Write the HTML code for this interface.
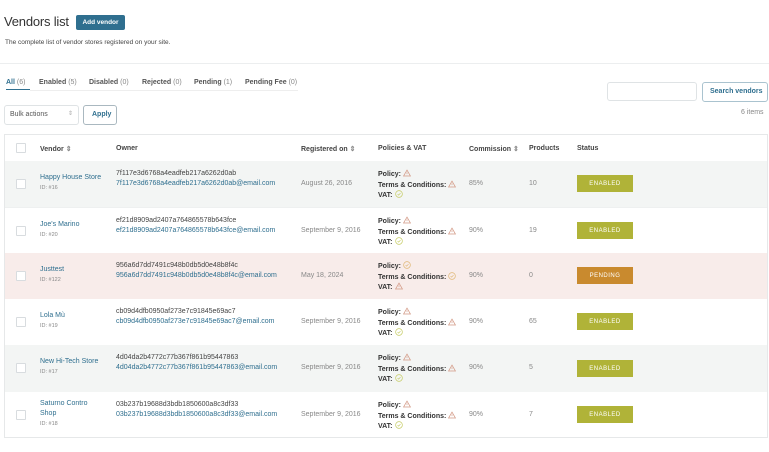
<!DOCTYPE html>
<html><head><meta charset="utf-8"><style>
*{box-sizing:border-box;margin:0;padding:0}
body{width:769px;height:452px;background:#fff;font-family:"Liberation Sans",sans-serif;color:#444;position:relative;overflow:hidden;font-size:7px}
.a{position:absolute;white-space:nowrap}
h1{position:absolute;left:4px;top:14px;font-size:13px;font-weight:400;color:#333;letter-spacing:-.2px}
.btn{position:absolute;left:76px;top:15px;width:49px;height:15px;background:#2f6f8f;color:#fff;font-size:6.5px;font-weight:bold;display:flex;align-items:center;justify-content:center;border-radius:2px}
.tab{position:absolute;top:79px;font-size:7px;font-weight:bold;color:#555}
.tab span{font-weight:400;color:#888}
.box{position:absolute;border:1px solid #dfe3e5;border-radius:3px;background:#fff}
.tbl{position:absolute;left:4px;top:134px;width:764px;height:304px;border:1px solid #e6e8e9}
.row{position:absolute;left:0;width:762px}
.cb{position:absolute;left:11px;width:10px;height:10px;border:1px solid #d8dcdf;background:#fff;border-radius:1px}
.th{position:absolute;top:10px;font-weight:bold;color:#444;font-size:7px}
.l{color:#2f6f8f}
.g{color:#888}
.b{font-weight:bold;color:#333}
.st{position:absolute;left:572px;width:56px;height:17px;color:#fff;font-size:6px;letter-spacing:.5px;display:flex;align-items:center;justify-content:center}
svg{vertical-align:-1px;margin-left:2px}
</style></head><body>
<svg width="0" height="0" style="position:absolute"><defs>
<symbol id="w" viewBox="0 0 10 9"><path d="M5 .8L9.3 8.3H.7Z" fill="none" stroke="#d39a86" stroke-width=".9"/><path d="M5 3.5v2.3M5 6.8v.4" stroke="#d39a86" stroke-width=".8"/></symbol>
<symbol id="o" viewBox="0 0 10 10"><circle cx="5" cy="5" r="4.2" fill="none" stroke="#c6cc66" stroke-width=".9"/><path d="M3.2 5.1l1.3 1.3 2.4-2.6" fill="none" stroke="#c6cc66" stroke-width=".8"/></symbol>
<symbol id="p" viewBox="0 0 10 10"><circle cx="5" cy="5" r="4.2" fill="none" stroke="#e0b877" stroke-width=".9"/><path d="M3.2 5.1l1.3 1.3 2.4-2.6" fill="none" stroke="#e0b877" stroke-width=".8"/></symbol>
</defs></svg>
<h1>Vendors list</h1>
<div class="btn">Add vendor</div>
<div class="a" style="left:5px;top:39px;font-size:6.5px;color:#444">The complete list of vendor stores registered on your site.</div>
<div class="a" style="left:0;top:63px;width:769px;border-top:1px solid #eceeef"></div>
<div class="tab" style="left:6px;color:#2f6f8f">All <span>(6)</span></div>
<div class="a" style="left:6px;top:89px;width:24px;border-top:1.5px solid #2f6f8f"></div>
<div class="a" style="left:30px;top:90px;width:268px;border-top:1px solid #eee"></div>
<div class="tab" style="left:39px">Enabled <span>(5)</span></div>
<div class="tab" style="left:89px">Disabled <span>(0)</span></div>
<div class="tab" style="left:142px">Rejected <span>(0)</span></div>
<div class="tab" style="left:194px">Pending <span>(1)</span></div>
<div class="tab" style="left:245px">Pending Fee <span>(0)</span></div>
<div class="box" style="left:4px;top:105px;width:75px;height:20px"></div>
<div class="a" style="left:10px;top:111px;color:#555">Bulk actions</div>
<div class="a" style="left:68px;top:110px;color:#aaa;font-size:6px">⇕</div>
<div class="box" style="left:83px;top:105px;width:34px;height:20px;border-color:#aab8c0"></div>
<div class="a l" style="left:92px;top:111px;font-weight:bold">Apply</div>
<div class="box" style="left:607px;top:82px;width:90px;height:19px"></div>
<div class="box" style="left:702px;top:82px;width:66px;height:20px;border-color:#aac3cf"></div>
<div class="a l" style="left:710px;top:88px;font-weight:bold">Search vendors</div>
<div class="a g" style="left:741px;top:109px">6 items</div>
<div class="tbl">
<div class="row" style="top:0;height:26px">
<div class="cb" style="top:8px"></div>
<div class="th" style="left:35px">Vendor <span class="g">⇕</span></div>
<div class="th" style="left:111px">Owner</div>
<div class="th" style="left:296px">Registered on <span class="g">⇕</span></div>
<div class="th" style="left:373px">Policies &amp; VAT</div>
<div class="th" style="left:464px">Commission <span class="g">⇕</span></div>
<div class="th" style="left:524px">Products</div>
<div class="th" style="left:572px">Status</div>
</div>
<div class="row" style="top:26px;height:46px;background:#f3f5f4">
<div class="cb" style="top:18px"></div>
<div class="a l" style="left:35px;top:13px">Happy House Store</div><div class="a g" style="left:35px;top:24px;font-size:5.5px">ID: #16</div>
<div class="a" style="left:111px;top:9px">7f117e3d6768a4eadfeb217a6262d0ab</div><div class="a l" style="left:111px;top:19px">7f117e3d6768a4eadfeb217a6262d0ab@email.com</div>
<div class="a g" style="left:296px;top:19px">August 26, 2016</div>
<div class="a b" style="left:373px;top:8px">Policy:<svg width="8" height="8"><use href="#w"/></svg></div><div class="a b" style="left:373px;top:19px">Terms &amp; Conditions:<svg width="8" height="8"><use href="#w"/></svg></div><div class="a b" style="left:373px;top:29px">VAT:<svg width="8" height="8"><use href="#o"/></svg></div>
<div class="a g" style="left:464px;top:19px">85%</div><div class="a g" style="left:524px;top:19px">10</div>
<div class="st" style="top:14px;background:#b0b338">ENABLED</div>
</div>
<div class="row" style="top:72px;height:46px;border-top:1px solid #eef0f0">
<div class="cb" style="top:18px"></div>
<div class="a l" style="left:35px;top:13px">Joe's Marino</div><div class="a g" style="left:35px;top:24px;font-size:5.5px">ID: #20</div>
<div class="a" style="left:111px;top:9px">ef21d8909ad2407a764865578b643fce</div><div class="a l" style="left:111px;top:19px">ef21d8909ad2407a764865578b643fce@email.com</div>
<div class="a g" style="left:296px;top:19px">September 9, 2016</div>
<div class="a b" style="left:373px;top:8px">Policy:<svg width="8" height="8"><use href="#w"/></svg></div><div class="a b" style="left:373px;top:19px">Terms &amp; Conditions:<svg width="8" height="8"><use href="#w"/></svg></div><div class="a b" style="left:373px;top:29px">VAT:<svg width="8" height="8"><use href="#o"/></svg></div>
<div class="a g" style="left:464px;top:19px">90%</div><div class="a g" style="left:524px;top:19px">19</div>
<div class="st" style="top:14px;background:#b0b338">ENABLED</div>
</div>
<div class="row" style="top:118px;height:46px;background:#f8ecea">
<div class="cb" style="top:18px"></div>
<div class="a l" style="left:35px;top:13px">Justtest</div><div class="a g" style="left:35px;top:24px;font-size:5.5px">ID: #122</div>
<div class="a" style="left:111px;top:9px">956a6d7dd7491c948b0db5d0e48b8f4c</div><div class="a l" style="left:111px;top:19px">956a6d7dd7491c948b0db5d0e48b8f4c@email.com</div>
<div class="a g" style="left:296px;top:19px">May 18, 2024</div>
<div class="a b" style="left:373px;top:8px">Policy:<svg width="8" height="8"><use href="#p"/></svg></div><div class="a b" style="left:373px;top:19px">Terms &amp; Conditions:<svg width="8" height="8"><use href="#p"/></svg></div><div class="a b" style="left:373px;top:29px">VAT:<svg width="8" height="8"><use href="#w"/></svg></div>
<div class="a g" style="left:464px;top:19px">90%</div><div class="a g" style="left:524px;top:19px">0</div>
<div class="st" style="top:14px;background:#c98a2e">PENDING</div>
</div>
<div class="row" style="top:164px;height:46px">
<div class="cb" style="top:18px"></div>
<div class="a l" style="left:35px;top:13px">Lola Mù</div><div class="a g" style="left:35px;top:24px;font-size:5.5px">ID: #19</div>
<div class="a" style="left:111px;top:9px">cb09d4dfb0950af273e7c91845e69ac7</div><div class="a l" style="left:111px;top:19px">cb09d4dfb0950af273e7c91845e69ac7@email.com</div>
<div class="a g" style="left:296px;top:19px">September 9, 2016</div>
<div class="a b" style="left:373px;top:8px">Policy:<svg width="8" height="8"><use href="#w"/></svg></div><div class="a b" style="left:373px;top:19px">Terms &amp; Conditions:<svg width="8" height="8"><use href="#w"/></svg></div><div class="a b" style="left:373px;top:29px">VAT:<svg width="8" height="8"><use href="#o"/></svg></div>
<div class="a g" style="left:464px;top:19px">90%</div><div class="a g" style="left:524px;top:19px">65</div>
<div class="st" style="top:14px;background:#b0b338">ENABLED</div>
</div>
<div class="row" style="top:210px;height:47px;background:#f3f5f4">
<div class="cb" style="top:18px"></div>
<div class="a l" style="left:35px;top:13px">New Hi-Tech Store</div><div class="a g" style="left:35px;top:24px;font-size:5.5px">ID: #17</div>
<div class="a" style="left:111px;top:9px">4d04da2b4772c77b367f861b95447863</div><div class="a l" style="left:111px;top:19px">4d04da2b4772c77b367f861b95447863@email.com</div>
<div class="a g" style="left:296px;top:19px">September 9, 2016</div>
<div class="a b" style="left:373px;top:8px">Policy:<svg width="8" height="8"><use href="#w"/></svg></div><div class="a b" style="left:373px;top:19px">Terms &amp; Conditions:<svg width="8" height="8"><use href="#w"/></svg></div><div class="a b" style="left:373px;top:29px">VAT:<svg width="8" height="8"><use href="#o"/></svg></div>
<div class="a g" style="left:464px;top:19px">90%</div><div class="a g" style="left:524px;top:19px">5</div>
<div class="st" style="top:15px;background:#b0b338">ENABLED</div>
</div>
<div class="row" style="top:257px;height:46px">
<div class="cb" style="top:18px"></div>
<div class="a l" style="left:35px;top:8px">Saturno Contro</div><div class="a l" style="left:35px;top:18px">Shop</div><div class="a g" style="left:35px;top:29px;font-size:5.5px">ID: #18</div>
<div class="a" style="left:111px;top:9px">03b237b19688d3bdb1850600a8c3df33</div><div class="a l" style="left:111px;top:19px">03b237b19688d3bdb1850600a8c3df33@email.com</div>
<div class="a g" style="left:296px;top:19px">September 9, 2016</div>
<div class="a b" style="left:373px;top:8px">Policy:<svg width="8" height="8"><use href="#w"/></svg></div><div class="a b" style="left:373px;top:19px">Terms &amp; Conditions:<svg width="8" height="8"><use href="#w"/></svg></div><div class="a b" style="left:373px;top:29px">VAT:<svg width="8" height="8"><use href="#o"/></svg></div>
<div class="a g" style="left:464px;top:19px">90%</div><div class="a g" style="left:524px;top:19px">7</div>
<div class="st" style="top:14px;background:#b0b338">ENABLED</div>
</div>
</div>
</body></html>
